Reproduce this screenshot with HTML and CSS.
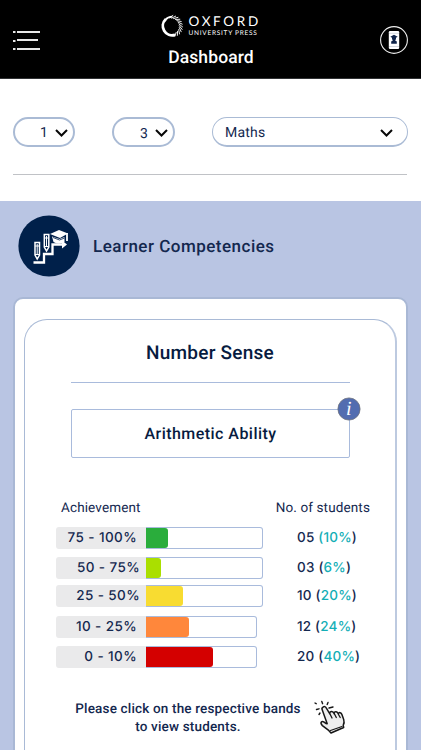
FILE: index.html
```html
<!DOCTYPE html>
<html lang="en">
<head>
<meta charset="utf-8">
<title>Dashboard</title>
<link rel="stylesheet" href="styles.css">
</head>
<body>
<div class="app">
  <header class="topbar">
    <svg class="menu" width="28" height="24" viewBox="0 0 28 24"><g fill="#e8e8e8"><rect x="0" y="2" width="2.5" height="2"/><rect x="4" y="2" width="23" height="2"/><rect x="0" y="11" width="2.5" height="2"/><rect x="4" y="10" width="21" height="2"/><rect x="0" y="19" width="2.5" height="2"/><rect x="4" y="19" width="23" height="2"/></g></svg>
    <div class="center">
      <div class="brand">
        <svg width="24" height="24" viewBox="0 0 24 24" fill="none" stroke="#fff">
          <path d="M15 21.5A10 10 0 0 1 5 4.8" stroke-width="3"/>
          <path d="M4.5 5.5A10 10 0 0 1 12 2" stroke-width="2"/>
          <path stroke-width="1" d="M9 3.5 13 .5M11 3.8 16 1.3M13 4.2l5.5-1.5M15 5l5.5-.2M16.5 6.2l5.5 1.1M17.8 7.7l5.2 2.5M18.7 9.5l4.6 3.7M19.2 11.3l3.6 4.7M19.3 13.3l2.4 5.2M18.8 15.4l1 5.5M17.7 17.2l-.3 5.2M16.3 18.5 14.7 23"/>
        </svg>
        <div class="words"><div class="oxford">OXFORD</div><div class="press">UNIVERSITY PRESS</div></div>
      </div>
      <h1>Dashboard</h1>
    </div>
    <svg class="device" width="30" height="30" viewBox="0 0 30 30"><circle cx="15" cy="15" r="13.4" fill="none" stroke="#eee" stroke-width="1.1"/><rect x="9.8" y="6" width="10.4" height="18" rx="1.2" fill="#fff"/><path d="M10 8.3h10M10 21.5h10" stroke="#b8bfca" stroke-width=".6"/><path d="m11.3 11.7 3.7-1.9 3.7 1.9-1.7 1v1.6l-1 1 1.8 1.3v2.2h-5.6v-2.2l1.8-1.3-1-1v-1.6z" fill="#10244a"/></svg>
  </header>
  <div class="filters">
    <div class="pill p1"><span>1</span><svg width="13" height="8" viewBox="0 0 13 8"><path d="m1 1 5.5 5.5L12 1"/></svg></div>
    <div class="pill p2"><span>3</span><svg width="13" height="8" viewBox="0 0 13 8"><path d="m1 1 5.5 5.5L12 1"/></svg></div>
    <div class="pill p3"><span>Maths</span><svg width="13" height="8" viewBox="0 0 13 8"><path d="m1 1 5.5 5.5L12 1"/></svg></div>
  </div>
  <main>
    <div class="section">
      <svg width="62" height="62" viewBox="0 0 62 62">
        <circle cx="31" cy="31" r="30.6" fill="#00204a"/>
        <path d="M15.5 47.5H26V39h8.5v-9.5h10" fill="none" stroke="#fff" stroke-width="2.3"/>
        <path d="m44 25.5 5 4-5 4z" fill="#fff"/>
        <g id="pencil"><path d="M17 27.5h4.5V40L19.2 44 17 40z" fill="#00204a" stroke="#fff" stroke-width="1.5"/><path d="M19.2 29v10M17 31h4.5M17 39.5h4.5" stroke="#fff"/></g>
        <use href="#pencil" x="9.3" y="-8"/>
        <path d="m32 19 9-4 9 3.5-8 4.5zM34 21.5l7.5 2.5 5-2v5q-6 3-11 0z" fill="#fff"/><path d="M49 18v8" stroke="#fff" stroke-width="1.8"/><path d="m35 22.5 6.5 2.5 5-2" fill="none" stroke="#00204a" stroke-width=".8"/>
      </svg>
      <h2>Learner Competencies</h2>
    </div>
    <div class="outer"><div class="inner">
      <h3>Number Sense</h3>
      <div class="ability">Arithmetic Ability
        <svg class="info" width="24" height="24" viewBox="0 0 24 24"><circle cx="12" cy="12" r="11.1" fill="#536db0" stroke="#70747f" stroke-width=".8"/><text x="12" y="18.2" text-anchor="middle">i</text></svg>
      </div>
      <div class="heads"><span>Achievement</span><span>No. of students</span></div>
      <div class="row r1"><div class="range">75 - 100%</div><div class="track"><i></i></div><div class="count">05 <b>(10%</b>)</div></div>
      <div class="row r2"><div class="range">50 - 75%</div><div class="track"><i></i></div><div class="count">03 (<b>6%</b>)</div></div>
      <div class="row r3"><div class="range">25 - 50%</div><div class="track"><i></i></div><div class="count">10 (<b>20%</b>)</div></div>
      <div class="row r4"><div class="range">10 - 25%</div><div class="track"><i></i></div><div class="count">12 (<b>24%</b>)</div></div>
      <div class="row r5"><div class="range">0 - 10%</div><div class="track"><i></i></div><div class="count">20 (<b>40%</b>)</div></div>
      <div class="hint">
        <p>Please click on the respective bands<br>to view students.</p>
        <svg width="34" height="36" viewBox="0 0 34 36" stroke="#161616" stroke-linejoin="round" stroke-linecap="round"><path d="M10 8.2q2-1.5 3.2.7l3.5 5.7q0-2.3 2-2.2 1.7.1 2.5 2.3 0-2.2 1.9-2 1.5.2 2.3 2.3.2-1.7 1.8-1.3 1.2.3 1.8 2l1.7 4.8q1 3-.5 5.8l.5 2.2L18 34l-2.3-2.6-6.3-4.8q-2.2-2.2-1-3.6 1.2-1.2 4.5 1.4l1.3.3L9.2 10.8q-.8-1.7.8-2.6z" fill="#eee" stroke-width="1.5"/><path d="m17 15 2 4m2.5-4 1.8 3.5m2.2-3 1.7 3" fill="none" stroke-width="1.3"/><path d="m17.5 31.5 11.5-4" stroke-width="1.2"/><path d="m2 4 1.2.7M8.8 2.5l.8 2.2M15 3.5l-.8 2M3.5 10.5 6 9.8M7 14l-1 1.5M16 9l4-1" stroke-width="1.4" fill="none"/></svg>
      </div>
    </div></div>
  </main>
</div>
</body>
</html>
```
FILE: styles.css
```css
*{box-sizing:border-box}
body{margin:0;background:#fff;color:#14284f;font-family:Roboto,"Liberation Sans",sans-serif;overflow:hidden;text-rendering:geometricPrecision}
h1,h2,h3,p{margin:0;font-weight:500}
.app{width:421px;height:750px;overflow:hidden}
.topbar{height:79px;background:#000;color:#fff;display:flex;justify-content:space-between;align-items:flex-start;padding:0 12px 0 13px;border-bottom:1px solid #303234}
.menu{margin-top:29px}
.device{margin-top:25px}
.center{width:110px;margin-left:2px;padding-top:14px;display:flex;flex-direction:column;align-items:center}
.brand{display:flex;gap:5px;width:100px;height:25px}
.words{white-space:nowrap;font-family:Lato,sans-serif}
.oxford{font-size:13.5px;line-height:15px;letter-spacing:2.7px}
.press{font-size:6.5px;line-height:7px;letter-spacing:.74px;margin-top:1px}
h1{font-size:17.5px;line-height:22px;margin-top:8px;letter-spacing:.1px}
.filters{height:96px;margin:0 14px 0 13px;padding-top:38px;display:flex;border-bottom:1px solid #c0c2c6}
.pill{height:30px;border:2px solid #aabbd5;border-radius:15px;display:flex;align-items:center;font-size:14px;flex:none;padding-top:1px}
.pill svg{fill:none;stroke:#080808;stroke-width:2}
.p1{width:62px;padding-left:25px;gap:7px}
.p2{width:63px;margin-left:37px;padding-left:26px;gap:7px}
.p2 span{margin-top:2px}
.p3{width:196px;margin-left:37px;padding:2px 14px 0 12px;justify-content:space-between;border-width:1px;border-bottom-width:2px;letter-spacing:.2px}
main{margin-top:26px;height:549px;background:#b9c5e3;padding:14px 13px 0}
.section{display:flex;align-items:center;height:62px;margin-left:5px;gap:13px}
h2{font-size:17px;letter-spacing:.49px;padding-top:2px}
.outer{margin-top:20px;height:470px;background:#fff;border:2px solid #a9b8d5;border-radius:10px;padding:20px 9px 0}
.inner{height:480px;border:1px solid #a9bad6;border-right-color:#bdcae0;border-width:1px 2px 1px 1px;border-radius:23px;padding:22px 45px 0 46px}
h3{font-size:19px;line-height:22px;height:41px;text-align:center;border-bottom:1px solid #a9bbdc;color:#071b40;letter-spacing:.23px;text-indent:-1px}
.ability{height:49px;margin-top:26px;border:1px solid #a9bbdc;border-radius:2px;text-align:center;line-height:47px;font-size:16px;font-weight:500;letter-spacing:.46px;position:relative;color:#071b40}
.info{position:absolute;right:-12px;top:-13px}
.info text{font:italic 20px "Liberation Serif",serif;fill:#fff}
.heads{display:flex;justify-content:space-between;margin:41px -20px 0 -10px;font-size:13.5px;line-height:18px;letter-spacing:.13px}
.row{display:flex;margin-left:-15px;width:320px;height:22px;font-family:Inter,sans-serif;font-size:13.5px;font-weight:450;letter-spacing:.4px}
.r1{margin-top:10px}.r2{margin-top:8px}.r3{margin-top:6px}.r4{margin-top:9px}.r5{margin-top:8px}
.range{width:90px;background:#eaeaeb;border-radius:3px 0 0 3px;text-align:right;padding-right:9px;line-height:22px;white-space:nowrap}
.r2 .range,.r3 .range{padding-right:6px}
.track{width:117px;border:1px solid #a9bbdc;border-left:0;border-radius:0 3px 3px 0}
.r4 .track,.r5 .track{width:111px}
.track i{display:block;height:20px;border-radius:0 3px 3px 0}
.r1 i{width:22px;background:#2aad3c}
.r2 i{width:15px;background:#aadf00}
.r3 i{width:37px;background:#f8dc31}
.r4 i{width:43px;background:#ff873b}
.r5 i{width:67px;background:#d40000}
.count{margin-left:34px;line-height:22px;white-space:nowrap;letter-spacing:.2px}
.r4 .count,.r5 .count{margin-left:40px}
.count b{font-weight:450;color:#13aeb6}
.hint{display:flex;margin-top:30px;margin-left:2px;width:280px;gap:10px}
.hint p{width:230px;font-size:13.5px;line-height:18px;text-align:center;font-weight:500;white-space:nowrap;letter-spacing:.17px;margin-top:2px}
.hint svg{margin-top:1px}
```
